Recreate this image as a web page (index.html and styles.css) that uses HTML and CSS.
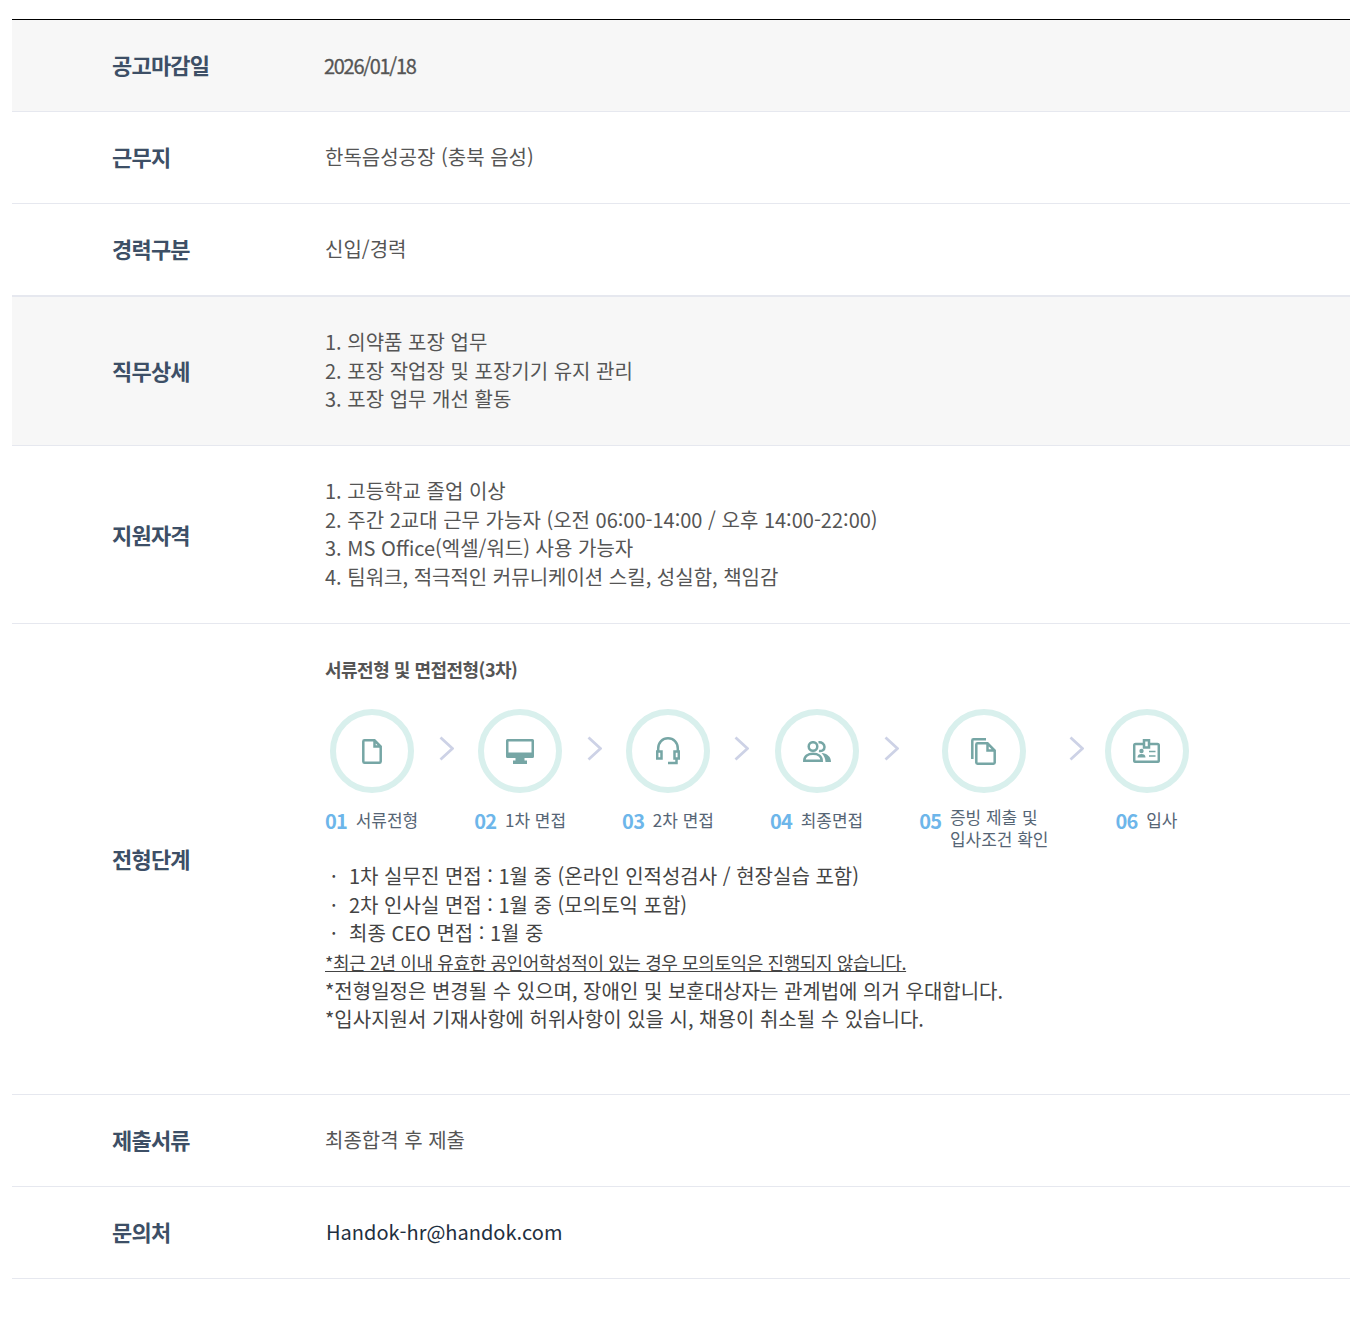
FILE: index.html
```html
<!DOCTYPE html>
<html lang="ko">
<head>
<meta charset="utf-8">
<title>채용공고</title>
<link rel="stylesheet" href="styles.css">
</head>
<body>
<div class="job-table">
  <div class="row shaded">
    <div class="label">공고마감일</div>
    <div class="value date">2026/01/18</div>
  </div>
  <div class="row">
    <div class="label">근무지</div>
    <div class="value">한독음성공장 (충북 음성)</div>
  </div>
  <div class="row thick">
    <div class="label">경력구분</div>
    <div class="value">신입/경력</div>
  </div>
  <div class="row shaded">
    <div class="label low">직무상세</div>
    <div class="value tall">1. 의약품 포장 업무<br>2. 포장 작업장 및 포장기기 유지 관리<br>3. 포장 업무 개선 활동</div>
  </div>
  <div class="row">
    <div class="label low">지원자격</div>
    <div class="value tall">1. 고등학교 졸업 이상<br>2. 주간 2교대 근무 가능자 (오전 06:00-14:00 / 오후 14:00-22:00)<br>3. MS Office(엑셀/워드) 사용 가능자<br>4. 팀워크, 적극적인 커뮤니케이션 스킬, 성실함, 책임감</div>
  </div>
  <div class="row">
    <div class="label low">전형단계</div>
    <div class="value process">
      <div class="process-title">서류전형 및 면접전형(3차)</div>
      <ol class="steps">
        <li class="step">
          <span class="circle">
            <svg viewBox="0 0 20 25" class="icon i-doc"><path d="M2.500 1.300H12.500L18.700 7.500V22.500Q18.700 23.700 17.500 23.700H2.500Q1.300 23.700 1.300 22.500V2.500Q1.300 1.300 2.500 1.300ZM12.500 1.300V7.500H18.700"/></svg>
          </span>
          <span class="caption"><b class="num">01</b><span class="txt">서류전형</span></span>
          <svg class="arrow" viewBox="0 0 15 25"><path d="M1.500 1.500L13.500 12.500L1.500 23.500"/></svg>
        </li>
        <li class="step">
          <span class="circle">
            <svg viewBox="0 0 28 25" class="icon i-mon"><path class="solid" fill-rule="evenodd" d="M1.500 0H26.500Q28 0 28 1.500V17.500Q28 19 26.500 19H18.500V21.500H21V25H7V21.500H9.500V19H1.500Q0 19 0 17.500V1.500Q0 0 1.500 0ZM2.500 2.500V13.500H25.500V2.500Z"/></svg>
          </span>
          <span class="caption"><b class="num">02</b><span class="txt">1차 면접</span></span>
          <svg class="arrow" viewBox="0 0 15 25"><path d="M1.500 1.500L13.500 12.500L1.500 23.500"/></svg>
        </li>
        <li class="step">
          <span class="circle">
            <svg viewBox="0 0 24 28" class="icon i-head"><path d="M2.200 15V11.500C2.200 5.500 6.500 1.300 12 1.300S21.800 5.500 21.800 11.500V15"/><path d="M1.200 14.500H5.500V21.500H1.200ZM18.500 14.500H22.800V21.500H18.500Z"/><path d="M20.500 21.500V26H12"/></svg>
          </span>
          <span class="caption"><b class="num">03</b><span class="txt">2차 면접</span></span>
          <svg class="arrow" viewBox="0 0 15 25"><path d="M1.500 1.500L13.500 12.500L1.500 23.500"/></svg>
        </li>
        <li class="step">
          <span class="circle">
            <svg viewBox="0 0 28 21" class="icon i-team"><circle cx="10" cy="5.500" r="4.300"/><path d="M1.300 19.700C1.300 15 5 12.700 10 12.700S18.700 15 18.700 19.700Z"/><path d="M15.500 1.300C19 1 21.500 3 21.500 6S19 10.500 16 10"/><path class="solid" d="M18.500 12C24 12.500 28 15.500 28 21H22.500C22.500 17.500 21 14.500 18.500 12Z"/></svg>
          </span>
          <span class="caption"><b class="num">04</b><span class="txt">최종면접</span></span>
          <svg class="arrow" viewBox="0 0 15 25"><path d="M1.500 1.500L13.500 12.500L1.500 23.500"/></svg>
        </li>
        <li class="step">
          <span class="circle">
            <svg viewBox="0 0 25 27" class="icon i-docs"><path d="M6.500 5.300H16.500L23.700 12.500V24.500Q23.700 25.700 22.500 25.700H6.500Q5.300 25.700 5.300 24.500V6.500Q5.300 5.300 6.500 5.300ZM16.500 5.300V12.500H23.700"/><path d="M1.300 21V2.500Q1.300 1.300 2.500 1.300H15"/></svg>
          </span>
          <span class="caption"><b class="num">05</b><span class="txt tight">증빙 제출 및<br>입사조건 확인</span></span>
          <svg class="arrow" viewBox="0 0 15 25"><path d="M1.500 1.500L13.500 12.500L1.500 23.500"/></svg>
        </li>
        <li class="step">
          <span class="circle">
            <svg viewBox="0 0 27 24" class="icon i-card"><path d="M10.500 5H2.500Q1.200 5 1.200 6.300V21.500Q1.200 22.800 2.500 22.800H24.500Q25.800 22.800 25.800 21.500V6.300Q25.800 5 24.500 5H16.500"/><path d="M11 1.200H16V8.500H11Z"/><circle class="solid" cx="8.500" cy="12" r="2.200"/><path class="solid" d="M4.500 18.500C4.500 16 6 15 8.500 15S12.500 16 12.500 18.500Z"/><path class="thin" d="M16 12.500H22.500M16 17H22.500"/></svg>
          </span>
          <span class="caption"><b class="num">06</b><span class="txt">입사</span></span>
        </li>
      </ol>
      <div class="notes">
        <div class="note">1차 실무진 면접 : 1월 중 (온라인 인적성검사 / 현장실습 포함)</div>
        <div class="note">2차 인사실 면접 : 1월 중 (모의토익 포함)</div>
        <div class="note">최종 CEO 면접 : 1월 중</div>
        <div class="small-note">*최근 2년 이내 유효한 공인어학성적이 있는 경우 모의토익은 진행되지 않습니다.</div>
        <div>*전형일정은 변경될 수 있으며, 장애인 및 보훈대상자는 관계법에 의거 우대합니다.</div>
        <div>*입사지원서 기재사항에 허위사항이 있을 시, 채용이 취소될 수 있습니다.</div>
      </div>
    </div>
  </div>
  <div class="row">
    <div class="label low">제출서류</div>
    <div class="value">최종합격 후 제출</div>
  </div>
  <div class="row">
    <div class="label low">문의처</div>
    <div class="value mail">Handok-hr@handok.com</div>
  </div>
</div>
</body>
</html>
```
FILE: styles.css
```css
* { box-sizing: border-box; }
html, body { margin: 0; padding: 0; background: #fff; }
body {
  padding: 19px 0 0 12px;
  font-family: "Noto Sans CJK KR", "Noto Sans", sans-serif;
  color: #555;
}
.job-table { border-top: 1px solid #000; }
.row {
  display: flex;
  align-items: center;
  min-height: 92px;
  padding-left: 100px;
  border-bottom: 1px solid #e6e8ef;
}
.row.shaded { background: #f7f7f7; }
.row.thick { min-height: 93px; border-bottom-width: 2px; }
.label {
  flex: 0 0 213px;
  font-size: 22px;
  font-weight: 700;
  letter-spacing: -0.8px;
  color: #3d4f66;
  padding-bottom: 4px;
}
.label.low { padding-bottom: 2px; }
.value {
  flex: 1;
  font-size: 20px;
  line-height: 28.6px;
  color: #555;
}
.value.tall { padding: 31px 0 31.500px; }
.value.process { padding: 31px 0 60px; }
.date {
  color: #555;
  letter-spacing: -1.300px;
  padding-top: 2px;
  margin-left: -1px;
  -webkit-text-stroke: 0.3px #555;
}
.mail { color: #1e2f40; padding-left: 1px; }
.process-title {
  font-size: 18px;
  font-weight: 700;
  letter-spacing: -0.5px;
  line-height: 28px;
  color: #555;
}
.steps {
  display: flex;
  list-style: none;
  margin: 26px 0 0;
  padding: 0;
  gap: 56px;
}
.step {
  position: relative;
  display: flex;
  flex-direction: column;
  align-items: center;
}
.circle {
  display: flex;
  align-items: center;
  justify-content: center;
  width: 84px;
  height: 84px;
  border: 6px solid #d9f0ed;
  border-radius: 50%;
  background: #fff;
}
.icon { fill: none; stroke: #76a6a5; stroke-width: 2.5; }
.icon .solid { fill: #76a6a5; stroke: none; }
.icon .thin { stroke-width: 1.6; }
.i-doc { width: 20px; height: 25px; }
.i-mon { width: 28px; height: 25px; }
.i-head { width: 24px; height: 28px; }
.i-team { width: 28px; height: 21px; }
.i-docs { width: 25px; height: 27px; }
.i-card { width: 27px; height: 24px; }
.arrow {
  position: absolute;
  left: calc(100% + 20.500px);
  top: 27px;
  width: 15px;
  height: 25px;
  fill: none;
  stroke: #cdd2e6;
  stroke-width: 2.8;
}
.caption {
  display: flex;
  align-items: flex-start;
  gap: 8.500px;
  margin-top: 13px;
  min-height: 44px;
}
.num {
  font-size: 20px;
  font-weight: 700;
  line-height: 30px;
  letter-spacing: -0.700px;
  color: #6db6ea;
  white-space: nowrap;
}
.txt {
  font-size: 17px;
  line-height: 22px;
  color: #566575;
  white-space: nowrap;
  padding-top: 3px;
}
.txt.tight { padding-top: 0; }
.notes { margin-top: 12px; color: #444; }
.note { padding-left: 24px; position: relative; }
.note::before {
  content: "·";
  position: absolute;
  left: 6px;
}
.small-note { font-size: 18px; text-decoration: underline; letter-spacing: -0.4px; }
```
